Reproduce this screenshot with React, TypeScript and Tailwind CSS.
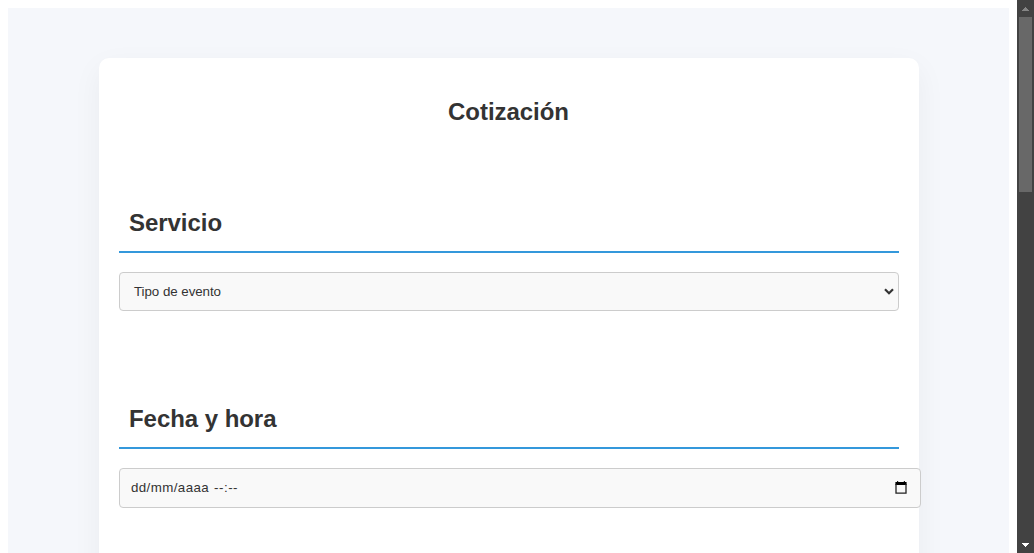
import React from "react";

function SectionTitle({ children }: { children: React.ReactNode }) {
  return (
    <h2 className="h-[57px] border-b-2 border-[#3498db] px-2.5 pt-[13px] text-2xl leading-7 font-bold tracking-[-0.05px] text-[#333]">
      {children}
    </h2>
  );
}

function CalendarIcon() {
  return (
    <svg className="mb-px h-[13px] w-3" viewBox="0 0 12 13" aria-hidden="true">
      <path d="M2 0h1.2v1.2H2zM8.8 0h1.2v1.2H8.8z" fill="#222" />
      <path d="M0.4 1h11.2v3H0.4z" fill="#000" />
      <path d="M1 3v9.2h10V3" fill="none" stroke="#222" strokeWidth="1.3" />
    </svg>
  );
}

function Scrollbar() {
  return (
    <div className="flex w-[17px] shrink-0 flex-col items-center bg-[#424242]">
      <div className="flex h-[17px] items-center justify-center">
        <svg className="h-1 w-[7px]" viewBox="0 0 7 4" shapeRendering="crispEdges" aria-hidden="true">
          <path d="M3 0h1v1H3zM2 1h3v1H2zM1 2h5v1H1zM0 3h7v1H0z" fill="#858585" />
        </svg>
      </div>
      <div className="h-[175px] w-[13px] bg-[#686868]" />
      <div className="mt-auto flex h-[17px] items-center justify-center">
        <svg className="h-1 w-[7px]" viewBox="0 0 7 4" shapeRendering="crispEdges" aria-hidden="true">
          <path d="M0 0h7v1H0zM1 1h5v1H1zM2 2h3v1H2zM3 3h1v1H3z" fill="#fff" />
        </svg>
      </div>
    </div>
  );
}

export default function App() {
  return (
    <div className="flex h-[553px] w-[1034px] overflow-hidden bg-white font-['Liberation_Sans',Arial,sans-serif] text-[#333]">
      <div className="h-[553px] w-[1017px] overflow-hidden pt-2 pr-2 pl-2">
        <main className="h-[700px] overflow-hidden bg-[#f5f7fb] pt-[50px] pl-[91px]">
          <form className="h-[700px] w-[820px] rounded-[10px] bg-white px-5 pt-10 shadow-[0_10px_30px_rgba(0,0,0,0.05)]">
            <h1 className="pr-px text-center text-2xl leading-7 font-bold tracking-[-0.05px]">Cotización</h1>

            <section className="mt-[70px]">
              <SectionTitle>Servicio</SectionTitle>
              <button
                type="button"
                className="mt-[19px] flex h-[39px] w-full items-center justify-between rounded border border-[#ccc] bg-[#f9f9f9] pr-1 pl-3.5 text-[13.333px]"
              >
                <span className="tracking-[-0.05px]">Tipo de evento</span>
                <svg className="h-[7px] w-[10px]" viewBox="0 0 10 7" aria-hidden="true">
                  <path d="M1 1.2l4 4 4-4" fill="none" stroke="#333" strokeWidth="2.2" />
                </svg>
              </button>
            </section>

            <section className="mt-[81px]">
              <SectionTitle>Fecha y hora</SectionTitle>
              <div className="mt-[19px] flex h-10 w-[802px] items-center justify-between rounded border border-[#ccc] bg-[#f9f9f9] pr-[13px] pl-[11px] text-[13.333px]">
                <div className="flex gap-[5px]">
                  <span className="tracking-[0.4px]">dd/mm/aaaa</span>
                  <span className="tracking-[0.5px]">--:--</span>
                </div>
                <CalendarIcon />
              </div>
            </section>
          </form>
        </main>
      </div>
      <Scrollbar />
    </div>
  );
}
